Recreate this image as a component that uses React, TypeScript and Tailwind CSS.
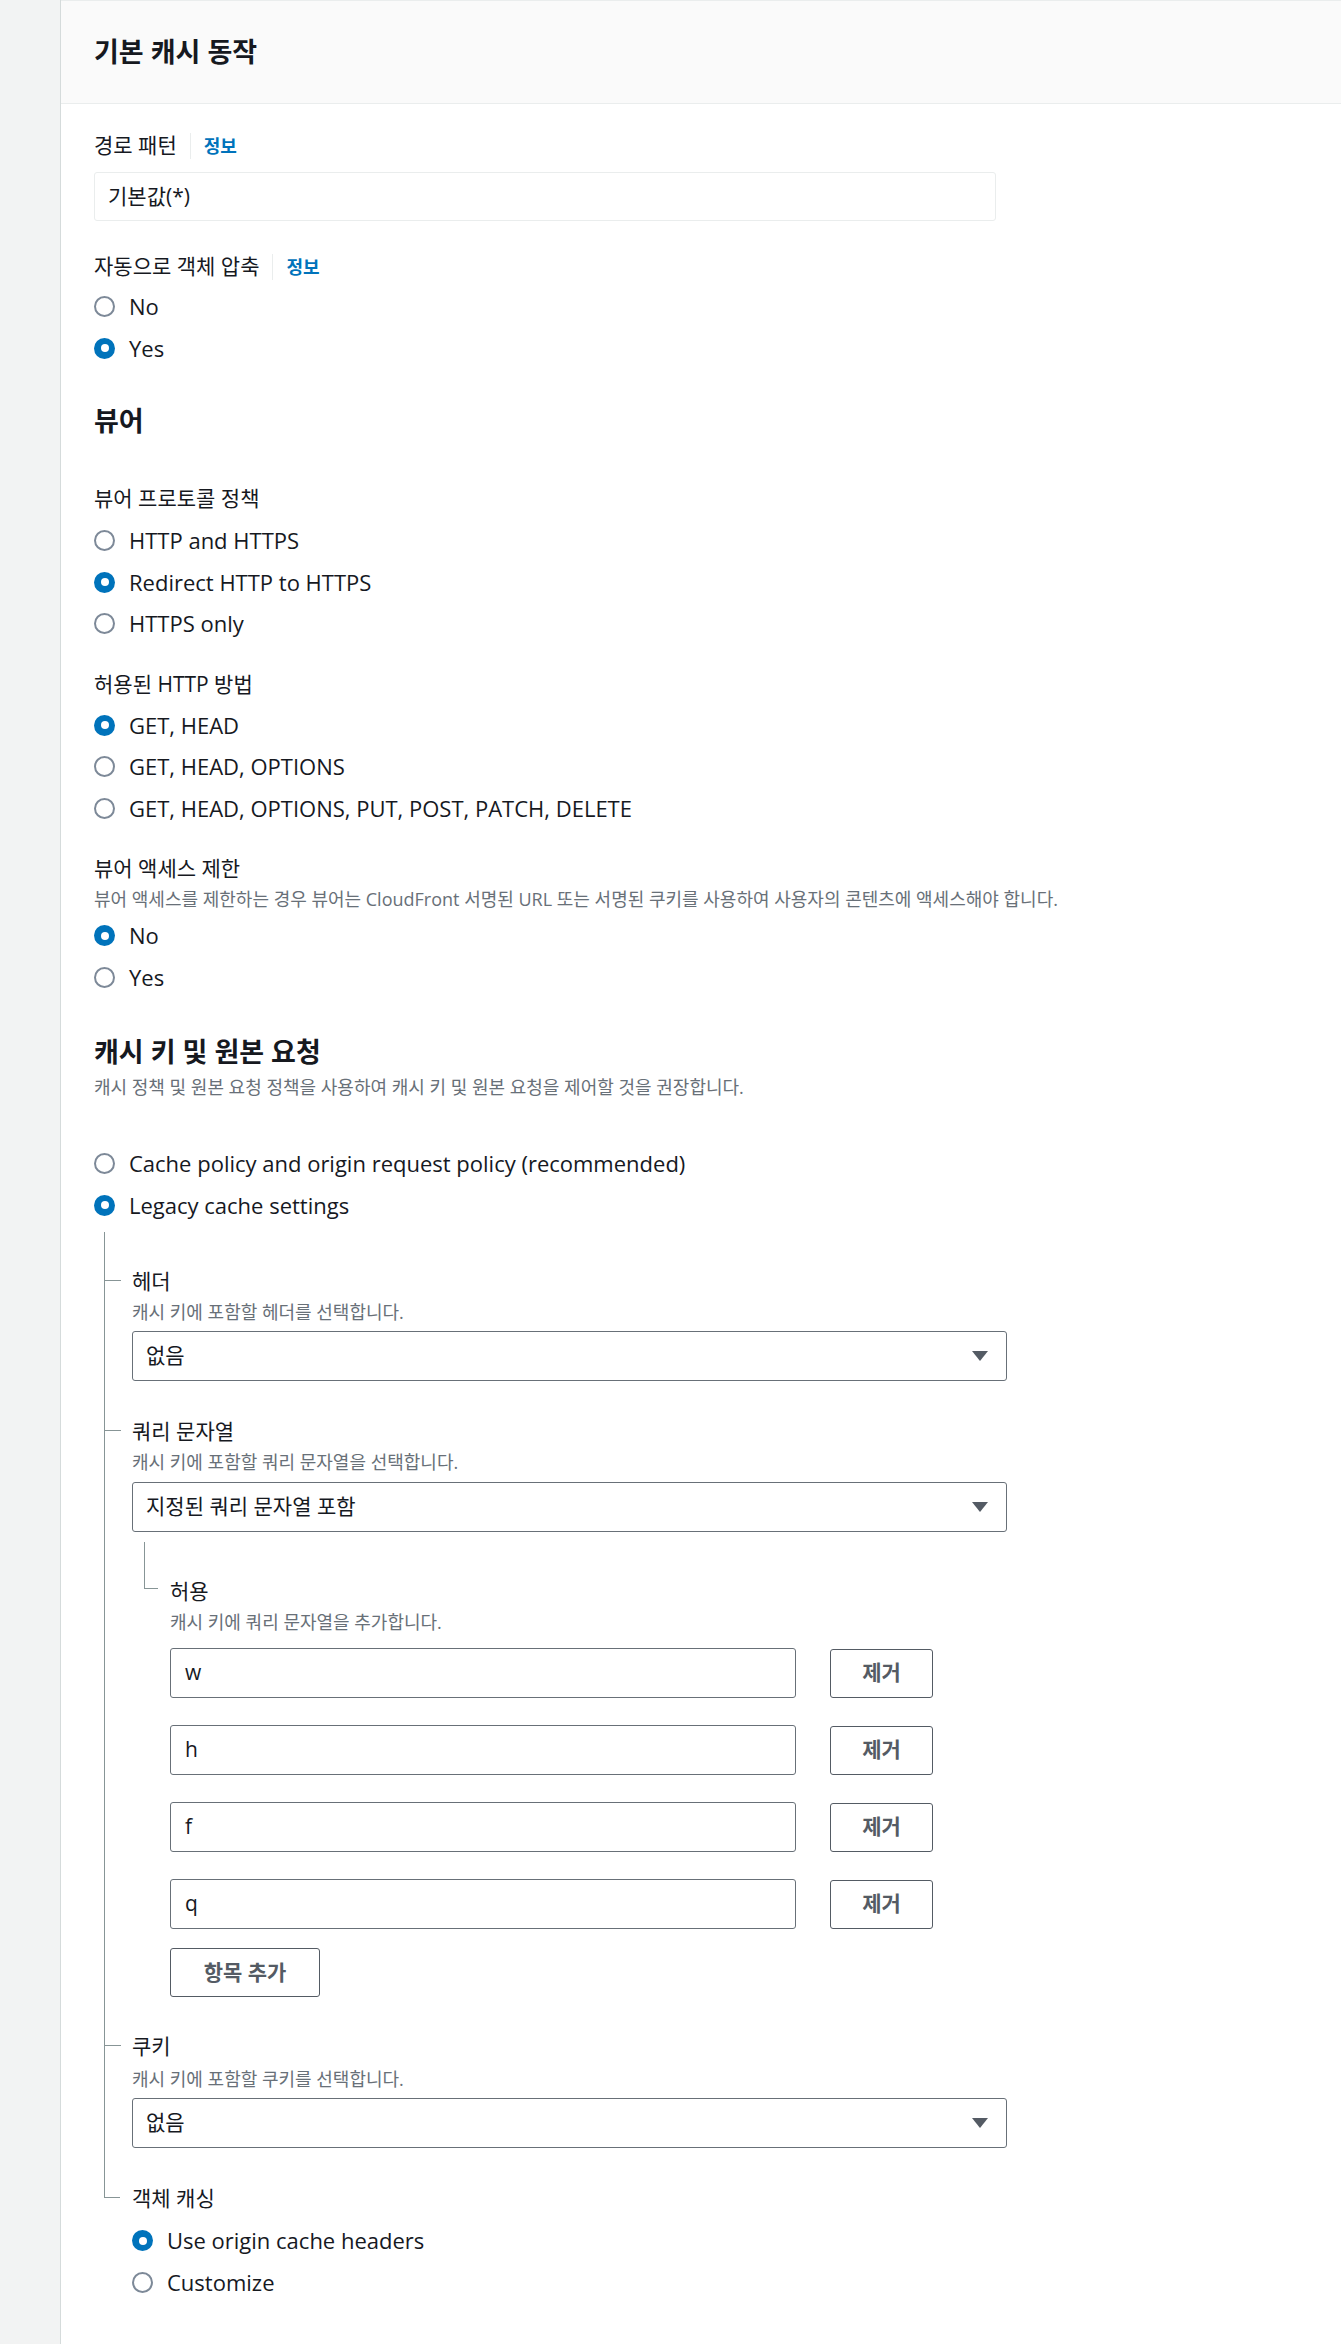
import React from "react";

// 기본 캐시 동작 편집 화면 (정적 재현)

const Info = () => (
    <>
        <span className="mx-[13px] h-[26px] w-px bg-[#eaeded]" />
        <span className="text-[18px] font-bold text-[#0073bb]">정보</span>
    </>
);

const Label = ({ children, info }: { children: React.ReactNode; info?: boolean }) => (
    <div className="flex h-[30px] items-center text-[21px] text-[#16191f]">
        <span>{children}</span>
        {info && <Info />}
    </div>
);

const Desc = ({ children }: { children: React.ReactNode }) => (
    <div className="flex h-[24px] items-center text-[18px] text-[#687078] whitespace-nowrap">{children}</div>
);

const Heading = ({ children }: { children: React.ReactNode }) => (
    <h2 className="flex h-[36px] items-center text-[27px] font-bold text-[#16191f]">{children}</h2>
);

const Radio = ({ label, checked }: { label: string; checked?: boolean }) => (
    <div className="flex h-[41.5px] items-center">
        {checked ? (
            <span className="flex h-[21px] w-[21px] items-center justify-center rounded-full bg-[#0073bb]">
                <span className="h-[8px] w-[8px] rounded-full bg-white" />
            </span>
        ) : (
            <span className="h-[21px] w-[21px] rounded-full border-2 border-[#7d8998] bg-white" />
        )}
        <span className="ml-[14px] text-[22px] text-[#16191f]">{label}</span>
    </div>
);

const Select = ({ value }: { value: string }) => (
    <div className="flex h-[50px] w-[875px] items-center justify-between rounded-[3px] border border-[#687078] bg-white pl-[13px] pr-[18px]">
        <span className="text-[21px] text-[#16191f]">{value}</span>
        <svg width="16" height="10" viewBox="0 0 16 10">
            <path d="M0 0 H16 L8 10 Z" fill="#545b64" />
        </svg>
    </div>
);

// 트리 연결선 (중간 항목)
const Branch = () => (
    <div className="w-[28px] shrink-0 border-l border-[#879596]">
        <div className="mt-[13px] w-[16px] border-t border-[#879596]" />
    </div>
);

// 트리 연결선 (마지막 항목)
const LastBranch = () => (
    <div className="w-[28px] shrink-0">
        <div className="h-[14px] w-[16px] border-b border-l border-[#879596]" />
    </div>
);

const queryKeys = ["w", "h", "f", "q"];

const App = () => {
    return (
        <div className="flex min-h-[2344px] w-full bg-white font-['Open_Sans','Noto_Sans_CJK_KR',sans-serif]">
            <div className="w-[61px] shrink-0 border-r border-[#d5dbdb] bg-[#f2f3f3]" />
            <div className="flex-1 border-t border-[#eaeded]">
                <div className="flex h-[103px] items-center border-b border-[#eaeded] bg-[#fafafa] pl-[33px]">
                    <h1 className="text-[27px] font-bold text-[#16191f]">기본 캐시 동작</h1>
                </div>

                <div className="pl-[33px]">
                    <div className="mt-[27px]">
                        <Label info>경로 패턴</Label>
                    </div>
                    <div className="mt-[11px] flex h-[49px] w-[902px] items-center rounded-[3px] border border-[#eaeded] bg-white pl-[13px] text-[21px] text-[#16191f]">
                        기본값(*)
                    </div>

                    <div className="mt-[31px]">
                        <Label info>자동으로 객체 압축</Label>
                    </div>
                    <div className="mt-[4px]">
                        <Radio label="No" />
                        <Radio label="Yes" checked />
                    </div>

                    <div className="mt-[34px]">
                        <Heading>뷰어</Heading>
                    </div>

                    <div className="mt-[45px]">
                        <Label>뷰어 프로토콜 정책</Label>
                    </div>
                    <div className="mt-[6px]">
                        <Radio label="HTTP and HTTPS" />
                        <Radio label="Redirect HTTP to HTTPS" checked />
                        <Radio label="HTTPS only" />
                    </div>

                    <div className="mt-[25px]">
                        <Label>허용된 HTTP 방법</Label>
                    </div>
                    <div className="mt-[5px]">
                        <Radio label="GET, HEAD" checked />
                        <Radio label="GET, HEAD, OPTIONS" />
                        <Radio label="GET, HEAD, OPTIONS, PUT, POST, PATCH, DELETE" />
                    </div>

                    <div className="mt-[25px]">
                        <Label>뷰어 액세스 제한</Label>
                    </div>
                    <div className="mt-[3px]">
                        <Desc>
                            뷰어 액세스를 제한하는 경우 뷰어는 CloudFront 서명된 URL 또는 서명된 쿠키를 사용하여 사용자의 콘텐츠에 액세스해야 합니다.
                        </Desc>
                    </div>
                    <div className="mt-[4px]">
                        <Radio label="No" checked />
                        <Radio label="Yes" />
                    </div>

                    <div className="mt-[36px]">
                        <Heading>캐시 키 및 원본 요청</Heading>
                    </div>
                    <div className="mt-[5px]">
                        <Desc>캐시 정책 및 원본 요청 정책을 사용하여 캐시 키 및 원본 요청을 제어할 것을 권장합니다.</Desc>
                    </div>
                    <div className="mt-[44px]">
                        <Radio label="Cache policy and origin request policy (recommended)" />
                        <Radio label="Legacy cache settings" checked />
                    </div>

                    {/* Legacy 설정 트리 */}
                    <div className="ml-[10px] mt-[6px]">
                        <div className="h-[35px] border-l border-[#879596]" />

                        <div className="flex">
                            <Branch />
                            <div className="pb-[36px]">
                                <Label>헤더</Label>
                                <div className="mt-[3px]">
                                    <Desc>캐시 키에 포함할 헤더를 선택합니다.</Desc>
                                </div>
                                <div className="mt-[7px]">
                                    <Select value="없음" />
                                </div>
                            </div>
                        </div>

                        <div className="flex">
                            <Branch />
                            <div className="pb-[35px]">
                                <Label>쿼리 문자열</Label>
                                <div className="mt-[3px]">
                                    <Desc>캐시 키에 포함할 쿼리 문자열을 선택합니다.</Desc>
                                </div>
                                <div className="mt-[8px]">
                                    <Select value="지정된 쿼리 문자열 포함" />
                                </div>

                                <div className="mt-[10px] flex">
                                    <div className="ml-[12px] w-[26px] shrink-0">
                                        <div className="h-[47px] w-[14px] border-b border-l border-[#879596]" />
                                    </div>
                                    <div className="pt-[35px]">
                                        <Label>허용</Label>
                                        <div className="mt-[3px]">
                                            <Desc>캐시 키에 쿼리 문자열을 추가합니다.</Desc>
                                        </div>
                                        <div className="mt-[14px] flex flex-col gap-[27px]">
                                            {queryKeys.map((k) => (
                                                <div key={k} className="flex items-center gap-[34px]">
                                                    <div className="flex h-[50px] w-[626px] items-center rounded-[3px] border border-[#687078] bg-white pl-[14px] text-[21px] text-[#16191f]">
                                                        {k}
                                                    </div>
                                                    <button className="h-[49px] w-[103px] rounded-[3px] border border-[#545b64] bg-white text-[21px] font-bold text-[#545b64]">
                                                        제거
                                                    </button>
                                                </div>
                                            ))}
                                        </div>
                                        <button className="mt-[19px] h-[49px] w-[150px] rounded-[3px] border border-[#545b64] bg-white text-[21px] font-bold text-[#545b64]">
                                            항목 추가
                                        </button>
                                    </div>
                                </div>
                            </div>
                        </div>

                        <div className="flex">
                            <Branch />
                            <div className="pb-[36px]">
                                <Label>쿠키</Label>
                                <div className="mt-[5px]">
                                    <Desc>캐시 키에 포함할 쿠키를 선택합니다.</Desc>
                                </div>
                                <div className="mt-[7px]">
                                    <Select value="없음" />
                                </div>
                            </div>
                        </div>

                        <div className="flex">
                            <LastBranch />
                            <div>
                                <Label>객체 캐싱</Label>
                                <div className="mt-[6px]">
                                    <Radio label="Use origin cache headers" checked />
                                    <Radio label="Customize" />
                                </div>
                            </div>
                        </div>
                    </div>
                </div>
            </div>
        </div>
    );
};

export default App;
